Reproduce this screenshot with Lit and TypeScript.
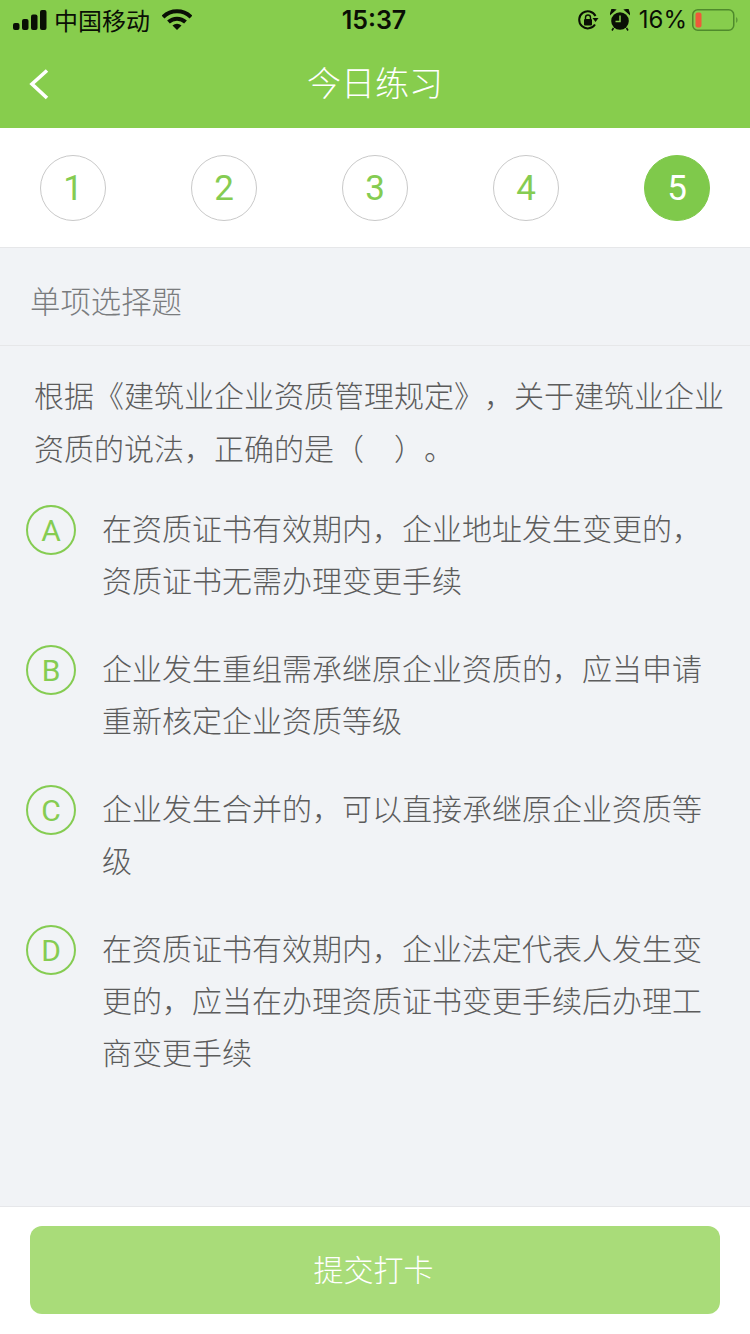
import { LitElement, html, css } from "lit";
import { customElement } from "lit/decorators.js";

const options = [
  { k: "A", lines: ["在资质证书有效期内，企业地址发生变更的，", "资质证书无需办理变更手续"] },
  { k: "B", lines: ["企业发生重组需承继原企业资质的，应当申请", "重新核定企业资质等级"] },
  { k: "C", lines: ["企业发生合并的，可以直接承继原企业资质等", "级"] },
  { k: "D", lines: ["在资质证书有效期内，企业法定代表人发生变", "更的，应当在办理资质证书变更手续后办理工", "商变更手续"] },
];

@customElement("app-root")
export class AppRoot extends LitElement {
  static styles = css`
    :host {
      display: flex;
      flex-direction: column;
      width: 750px;
      height: 1334px;
      background: #f1f3f6;
      font-family: "Noto Sans CJK SC", "Noto Sans", sans-serif;
      text-spacing-trim: space-all;
      overflow: hidden;
    }
    .status {
      height: 40px;
      background: #87cd4d;
      display: grid;
      grid-template-columns: 1fr auto 1fr;
      align-items: center;
      color: #0a0f05;
      padding: 0 12px 0 13px;
      box-sizing: border-box;
    }
    .left, .right { display: flex; align-items: center; }
    .right { justify-content: flex-end; }
    .carrier { font-size: 24px; margin-left: 5px; line-height: 40px; }
    .wifi { margin-left: 12px; }
    .time { font-family: "Inter", "Liberation Sans", sans-serif; font-size: 25px; font-weight: 600; line-height: 40px; margin-left: -3px; }
    .pct { font-family: "Inter", "Liberation Sans", sans-serif; font-size: 24px; margin: 0 5px 0 9px; line-height: 40px; }
    .alarm { margin-left: 11px; }
    .nav {
      height: 88px;
      background: #87cd4d;
      display: flex;
      align-items: center;
      justify-content: center;
      position: relative;
      color: #fff;
      font-size: 34px;
      font-weight: 300;
    }
    .nav .title { position: relative; top: -3px; }
    .back { position: absolute; left: 28px; top: 28px; }
    .steps {
      height: 120px;
      background: #fff;
      display: flex;
      justify-content: space-between;
      align-items: flex-start;
      padding: 27px 40px 0;
      box-sizing: border-box;
      border-bottom: 1px solid #e6e7e9;
    }
    .step {
      width: 66px;
      height: 66px;
      box-sizing: border-box;
      border-radius: 50%;
      border: 1px solid #c9c9c9;
      display: flex;
      align-items: center;
      justify-content: center;
      font-family: "Roboto", "Liberation Sans", sans-serif;
      font-size: 35px;
      font-weight: 400;
      color: #85cc52;
    }
    .step.on { background: #7fc94b; border-color: #7fc94b; color: #fff; }
    .kind {
      height: 98px;
      box-sizing: border-box;
      padding: 6px 30px 0;
      display: flex;
      align-items: center;
      font-size: 30.400px;
      color: #7a7c7e;
      font-weight: 300;
      border-bottom: 1px solid #e6e7e9;
    }
    .q {
      padding: 22px 0 0 34px;
      font-size: 30px;
      font-weight: 300;
      line-height: 52.500px;
      color: #5c5c5c;
    }
    .q div { white-space: pre; }
    .opts {
      display: flex;
      flex-direction: column;
      gap: 36px;
      padding: 28px 0 0 26px;
    }
    .opt { display: flex; align-items: flex-start; gap: 26px; }
    .badge {
      flex: none;
      width: 50px;
      height: 50px;
      margin-top: 4px;
      box-sizing: border-box;
      border: 2px solid #85cc52;
      border-radius: 50%;
      color: #85cc52;
      display: flex;
      align-items: center;
      justify-content: center;
      font-family: "Roboto", "Liberation Sans", sans-serif;
      font-size: 30px;
      font-weight: 400;
    }
    .txt { font-size: 30px; font-weight: 300; line-height: 52px; color: #5c5c5c; white-space: nowrap; }
    .foot {
      margin-top: auto;
      height: 128px;
      box-sizing: border-box;
      background: #fff;
      border-top: 1px solid #e6e7ea;
      padding: 19px 30px 0;
    }
    .btn {
      height: 88px;
      background: #a9dc79;
      border-radius: 12px;
      color: #fff;
      font-size: 30px;
      font-weight: 300;
      display: flex;
      align-items: center;
      justify-content: center;
      padding: 0 3px 4px 0;
      box-sizing: border-box;
    }
  `;

  render() {
    return html`
      <div class="status">
        <div class="left">
          <svg width="36" height="22" viewBox="0 0 36 22">
            <rect x="0" y="14" width="6.500" height="7" rx="2" fill="#0a0f05"/>
            <rect x="9" y="10" width="6.500" height="11" rx="2" fill="#0a0f05"/>
            <rect x="18" y="5.500" width="6.500" height="15.500" rx="2" fill="#0a0f05"/>
            <rect x="27" y="1" width="6.500" height="20" rx="2" fill="#0a0f05"/>
          </svg>
          <span class="carrier">中国移动</span>
          <svg class="wifi" width="30" height="22" viewBox="0 0 30 22">
            <path d="M1 8 A20 20 0 0 1 29 8" fill="none" stroke="#0a0f05" stroke-width="4"/>
            <path d="M6.500 13 A12.500 12.500 0 0 1 23.500 13" fill="none" stroke="#0a0f05" stroke-width="4"/>
            <path d="M10.500 16.500 A7 7 0 0 1 19.500 16.500 L15 21 Z" fill="#0a0f05"/>
          </svg>
        </div>
        <div class="time">15:37</div>
        <div class="right">
          <svg width="22" height="22" viewBox="0 0 22 22">
            <path d="M18 15.500 A8.600 8.600 0 1 1 18.500 7" fill="none" stroke="#0a0f05" stroke-width="2"/>
            <path d="M15.500 9 L21.500 9 L18.500 13 Z" fill="#0a0f05"/>
            <rect x="7" y="10" width="8" height="6.500" rx="1" fill="#0a0f05"/>
            <path d="M8.500 10 V8.500 A2.500 2.500 0 0 1 13.500 8.500 V10" fill="none" stroke="#0a0f05" stroke-width="1.400"/>
          </svg>
          <svg class="alarm" width="20" height="22" viewBox="0 0 20 22">
            <circle cx="10" cy="12" r="8.800" fill="#0a0f05"/>
            <path d="M0.500 5 L5 1 L2 0.500 Z M19.500 5 L15 1 L18 0.500 Z" fill="#0a0f05" stroke="#0a0f05" stroke-width="1.500"/>
            <path d="M10 6.500 V12.500 H5.500" fill="none" stroke="#87cd4d" stroke-width="1.500"/>
            <path d="M3.500 19 L2 21.500 M16.500 19 L18 21.500" stroke="#0a0f05" stroke-width="1.500"/>
          </svg>
          <span class="pct">16%</span>
          <svg width="46" height="24" viewBox="0 0 46 24">
            <rect x="0.750" y="1.750" width="41" height="20.500" rx="5" fill="none" stroke="#4f8a2c" stroke-width="1.500"/>
            <rect x="3.500" y="4.500" width="6" height="15" rx="2" fill="#ee5a3a"/>
            <path d="M44 9 A3.500 3.500 0 0 1 44 15 Z" fill="#5e9a38"/>
          </svg>
        </div>
      </div>
      <div class="nav">
        <svg class="back" width="22" height="32" viewBox="0 0 22 32">
          <path d="M19 2.500 L4 16 L19 30" fill="none" stroke="#fff" stroke-width="3.600"/>
        </svg>
        <span class="title">今日练习</span>
      </div>
      <div class="steps">
        ${[1, 2, 3, 4, 5].map((n) => html`<div class="step ${n === 5 ? "on" : ""}">${n}</div>`)}
      </div>
      <div class="kind">单项选择题</div>
      <div class="q">
        <div>根据《建筑业企业资质管理规定》，关于建筑业企业</div>
        <div>资质的说法，正确的是（　）。</div>
      </div>
      <div class="opts">
        ${options.map(
          (o) => html`<div class="opt">
            <div class="badge">${o.k}</div>
            <div class="txt">${o.lines.map((l) => html`<div>${l}</div>`)}</div>
          </div>`
        )}
      </div>
      <div class="foot"><div class="btn">提交打卡</div></div>
    `;
  }
}
